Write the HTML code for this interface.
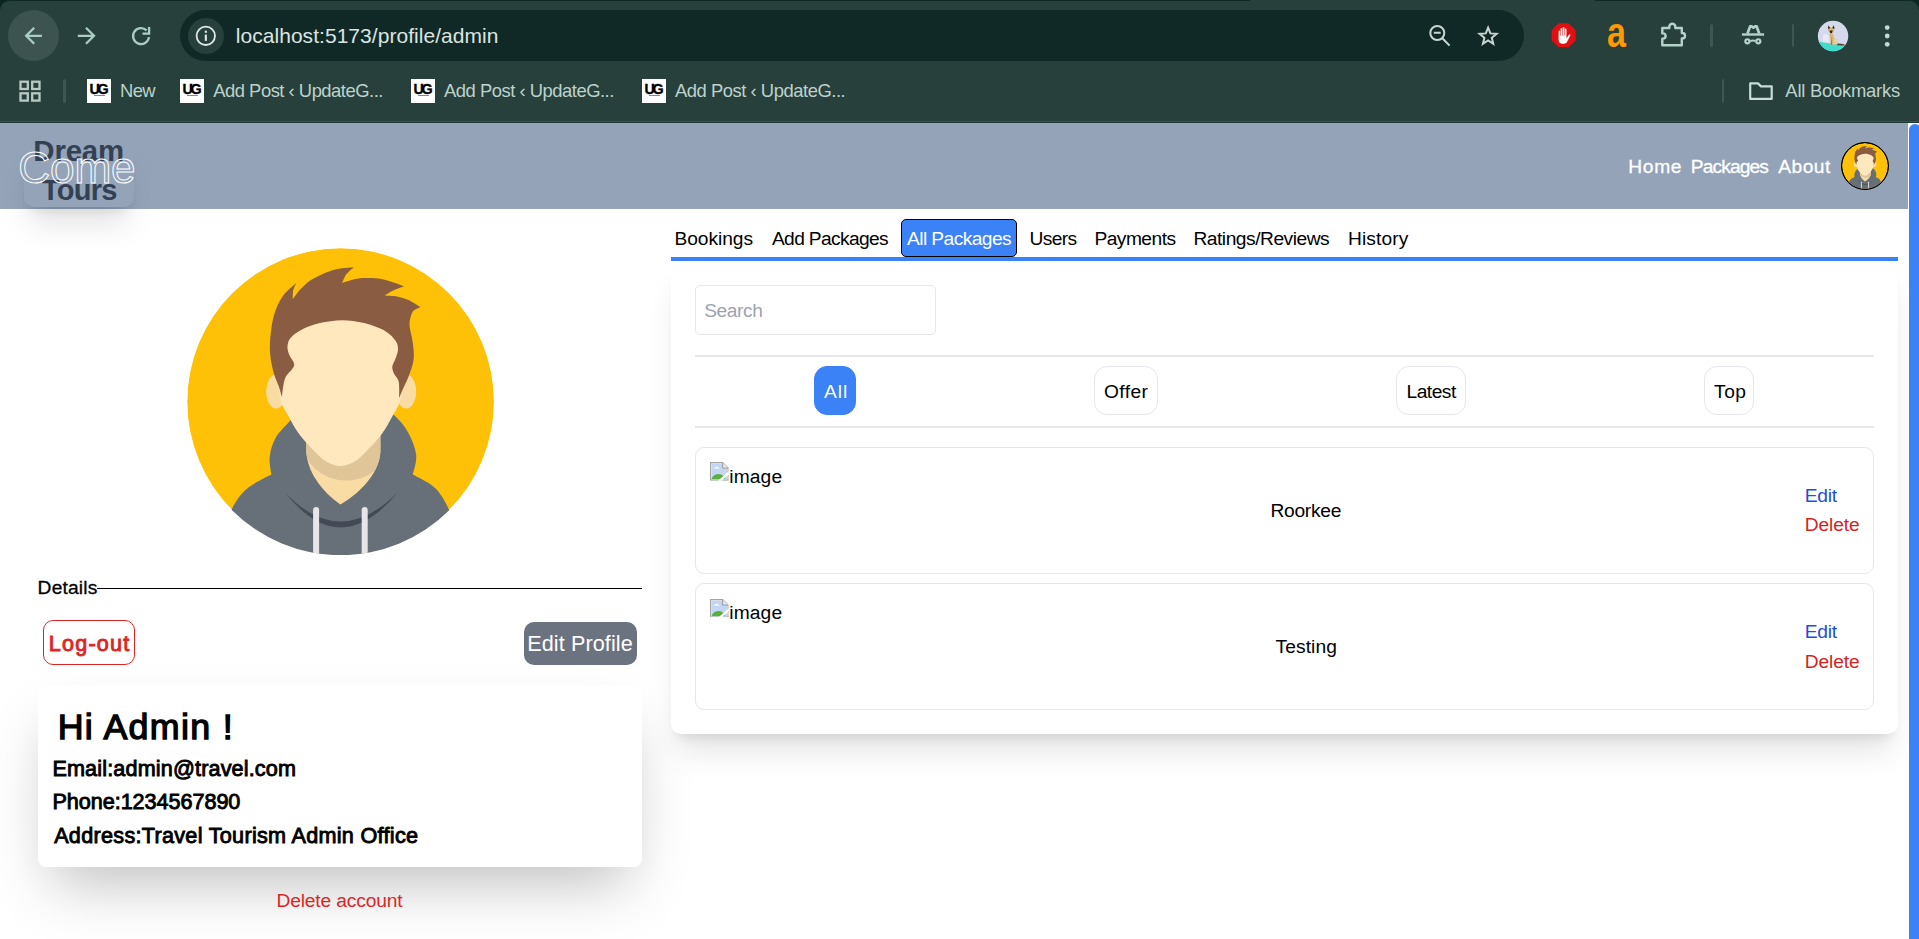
<!DOCTYPE html>
<html lang="en">
<head>
<meta charset="utf-8">
<title>Dream Tours - Admin Profile</title>
<style>
*{box-sizing:border-box;margin:0;padding:0}
html,body{width:1919px;height:939px;overflow:hidden;background:#fff}
body{position:relative;font-family:"Liberation Sans",sans-serif;color:#000}
.abs{position:absolute}
.t{position:absolute;white-space:nowrap;line-height:1}
/* ---------- browser chrome ---------- */
#chrome{position:absolute;left:0;top:0;width:1919px;height:123px;background:#27403b;overflow:hidden}
#chrome .edge{position:absolute;left:0;top:0;width:1919px;height:122px;border-top:1px solid #0d2723;border-radius:10px 10px 0 0;box-shadow:0 0 0 12px #0a2420}
#chrome .bline{position:absolute;left:0;top:121px;width:1919px;height:2px;background:linear-gradient(#414b48 0 50%,#213934 50% 100%)}
#backbg{left:7.5px;top:10px;width:51px;height:51px;border-radius:50%;background:#3d5350}
#urlbar{left:180px;top:10px;width:1344px;height:51px;border-radius:26px;background:#112926}
#infobg{left:188px;top:18px;width:36px;height:36px;border-radius:50%;background:#27403b}
.fav{position:absolute;top:79px;width:24px;height:24px;background:#fff;overflow:hidden}
.fav b{-webkit-text-stroke:.35px #000;position:absolute;left:2.6px;top:3.4px;font-size:14.4px;line-height:14px;letter-spacing:-2.5px;color:#000;font-weight:bold}
.fav i{position:absolute;left:7px;top:16.3px;width:11px;height:1.2px;background:#888}
.vsep{position:absolute;width:2.5px;border-radius:2px;background:#3d5751}
/* ---------- page ---------- */
#nav{left:0;top:123px;width:1908px;height:85.5px;background:#94a3b8}
#sb{left:1908px;top:123px;width:11px;height:816px;background:#fff}
#sb i{position:absolute;left:1px;top:.5px;width:12px;height:830px;border-radius:6px;background:#3b82f6}
#logobox{left:24px;top:141px;width:110px;height:66px;border-radius:10px;background:#94a3b8;box-shadow:0 24px 30px -6px rgba(0,0,0,.1),0 10px 12px -7px rgba(0,0,0,.1)}
#navav{left:1841px;top:141.7px;width:48.2px;height:48.2px;border:1.1px solid #000;border-radius:50%;overflow:hidden;background:#000}
#logout{left:43px;top:620px;width:92px;height:45px;border:1.2px solid #dc2626;border-radius:10px}
#editp{left:524px;top:622px;width:113.2px;height:43px;border-radius:10px;background:#6b7280}
#info{left:38px;top:685px;width:603.6px;height:182px;border-radius:8px;background:#fff;box-shadow:0 30px 60px -14px rgba(0,0,0,.25)}
#card{left:671px;top:261px;width:1226.6px;height:472.5px;border-radius:0 0 10px 10px;background:#fff;box-shadow:0 24px 30px -6px rgba(0,0,0,.1),0 10px 12px -7px rgba(0,0,0,.1)}
#tabsel{left:901px;top:219px;width:115.8px;height:38px;border:1.2px solid #000;border-radius:5px;background:#3b82f6}
#search{left:695px;top:285px;width:240.6px;height:49.6px;border:1.2px solid #e5e7eb;border-radius:5px}
.hr{left:695px;width:1178.5px;height:2px;background:#e5e7eb}
.fb{top:366.2px;height:49.3px;border:1.2px solid #e5e7eb;border-radius:13px}
.item{left:695px;width:1178.8px;height:126.6px;border:1.2px solid #e5e7eb;border-radius:9px}

</style>
</head>
<body>
<!-- CHROME -->
<div id="chrome">
  <div class="edge"></div>
  <div class="bline"></div>
  <div class="abs" id="tgap" style="left:1250px;top:0;width:345px;height:2px;background:#27403b"></div>
  <div id="backbg" class="abs"></div>
  <div id="urlbar" class="abs"></div>
  <div id="infobg" class="abs"></div>
  <svg class="abs" style="left:0;top:0" width="1919" height="122" viewBox="0 0 1919 122" fill="none">
    <!-- back / forward / reload -->
    <g stroke="#a9cdc3" stroke-width="2.3" fill="none">
      <path d="M41.9 35.8H26.6M34.2 27.8L26.2 35.8L34.2 43.8"/>
      <path d="M77.8 35.8H93.6M86 27.8L94 35.8L86 43.8"/>
      <path d="M146.6 30.3A8 8 0 1 0 149 37.2"/>
      <path d="M149.1 27V33.6H142.5"/>
    </g>
    <!-- info -->
    <circle cx="205.8" cy="35.8" r="9.2" stroke="#dfe8e5" stroke-width="1.8"/>
    <rect x="204.8" y="34.6" width="2.1" height="6.3" fill="#dfe8e5"/>
    <rect x="204.8" y="30.7" width="2.1" height="2.1" fill="#dfe8e5"/>
    <!-- zoom out -->
    <g stroke="#c8d6d2" stroke-width="2">
      <circle cx="1437.3" cy="33" r="7"/>
      <path d="M1433.8 32.8H1440.7M1442.3 38.2L1449.6 45.6"/>
    </g>
    <!-- star -->
    <path d="M1488.1 27.7L1490.4 33.4L1496.6 33.8L1491.8 37.8L1493.3 43.8L1488.1 40.5L1482.9 43.8L1484.4 37.8L1479.6 33.8L1485.8 33.4Z" stroke="#c8d6d2" stroke-width="2" stroke-linejoin="miter" stroke-miterlimit="10"/>
    <!-- adblock -->
    <path d="M1558.6 23.2H1568.6L1575.7 30.3V40.3L1568.6 47.3H1558.6L1551.6 40.3V30.3Z" fill="#df0f12"/>
    <path d="M1558.6 31.2c0-1 1.5-1 1.5 0v4.6h.5v-7c0-1.1 1.6-1.1 1.6 0v6.6h.5v-7.5c0-1.1 1.7-1.1 1.7 0v7.6h.5v-6.2c0-1.1 1.6-1.1 1.6 0v9l2.4-3.6c.6-.9 1.9-.2 1.4.8l-3.2 6.3c-.7 1.4-1.9 1.9-3.3 1.900000h-1.400000c-2.2 0-3.8-1.6-3.8-3.800000z" fill="#fff"/>
    <!-- puzzle -->
    <path d="M1662.3 28h7v-1.3a3 3 0 0 1 6 0v1.3h6.5v5h.5a2.7 2.7 0 0 1 0 5.4h-.5v6.9h-19.5v-6.7h.7a2.6 2.6 0 0 0 0-5.2h-.7z" stroke="#b4d2c9" stroke-width="2.4" stroke-linejoin="round"/>
    <!-- incognito -->
    <g stroke="#b4d2c9" fill="none">
      <path d="M1741.9 34.5H1764.1" stroke-width="2.4"/>
      <path d="M1747.4 33.8L1750.2 26.3H1751.6L1753.4 27.7L1755.2 26.3H1756.6L1759.3 33.8" stroke-width="2.7" stroke-linejoin="round"/>
      <circle cx="1747.4" cy="41.3" r="2.05" stroke-width="2.2"/>
      <circle cx="1758.3" cy="41.3" r="2.05" stroke-width="2.2"/>
      <path d="M1750.2 41.1Q1752.850000 40 1755.5 41.1" stroke-width="1.9"/>
    </g>
    <!-- dots -->
    <g fill="#c3d9d2"><circle cx="1887.2" cy="27.6" r="2.4"/><circle cx="1887.2" cy="36" r="2.4"/><circle cx="1887.2" cy="44.3" r="2.4"/></g>
    <!-- profile avatar -->
    <clipPath id="pc"><circle cx="1833.05" cy="36" r="15.2"/></clipPath>
    <g clip-path="url(#pc)">
      <rect x="1817" y="20" width="33" height="33" fill="#d5d9ec"/>
      <path d="M1822.8 35.5q3-2.5 5.8-.5l.5 7.5h-6z" fill="#e7e9f3"/>
      <path d="M1817 41.6L1849 46V53H1817Z" fill="#41dccb"/>
      <path d="M1831.6 37.5q4.2-1.2 6 3.3l.4 3.5h-6.2z" fill="#e9cf9c"/>
      <path d="M1837.5 43.6q4 .2 7.2 1l-.2.9-7.4-.3z" fill="#5a3b2b"/>
      <path d="M1829.3 33.5l3.8.2.7 4-.6 7.3-2.4.2-.4-6z" fill="#d9b479"/>
      <path d="M1827.7 28.2l.5-2.7 2 2.2h1.6l2-2.4.6 3.1-.8 3.3-2.5 2.3-2.6-2.2z" fill="#d9b479"/>
      <path d="M1828.1 25.4l2.2 2.5-2 1.3zM1834 25.2l.4 3.8-2.2-1.1zM1829.6 30.5h3l-.4 2-1.1.9000-1.1-.9000z" fill="#2a2220"/>
      <path d="M1831.2 36l.6 8.7h-.8z" fill="#7a5a3a"/>
    </g>
    <!-- apps grid -->
    <g stroke="#b9c9c4" stroke-width="2.3">
      <rect x="20.5" y="81.7" width="7.3" height="7.3"/><rect x="32.2" y="81.7" width="7.3" height="7.3"/>
      <rect x="20.5" y="93.3" width="7.3" height="7.3"/><rect x="32.2" y="93.3" width="7.3" height="7.3"/>
    </g>
    <!-- folder -->
    <path d="M1750.2 83.400000h7.800000l3 3h10.700000v12.500000h-21.500000z" stroke="#c9dcd6" stroke-width="2.2" stroke-linejoin="round"/>
  </svg>
  <div class="t" id="amz" style="left:1606.5px;top:11.9px;font-size:42px;font-weight:bold;color:#ff9900;transform-origin:0 0;transform:scaleX(.81)">a</div>
  <div class="vsep" style="left:1710px;top:23.5px;height:23.8px"></div>
  <div class="vsep" style="left:1791.7px;top:23.5px;height:23.8px"></div>
  <span class="t" id="url" style="left:235.78px;top:24.62px;font-size:21px;color:#dbe4e1;letter-spacing:0.044px;">localhost:5173/profile/admin</span>
  <span class="t" id="bm1" style="left:119.89px;top:81.92px;font-size:18.4px;color:#bdd2cc;letter-spacing:-0.516px;">New</span>
  <span class="t" id="bm2" style="left:213.26px;top:81.92px;font-size:18.4px;color:#bdd2cc;letter-spacing:-0.490px;">Add Post ‹ UpdateG...</span>
  <span class="t" id="bm3" style="left:443.96px;top:81.92px;font-size:18.4px;color:#bdd2cc;letter-spacing:-0.475px;">Add Post ‹ UpdateG...</span>
  <span class="t" id="bm4" style="left:674.96px;top:81.92px;font-size:18.4px;color:#bdd2cc;letter-spacing:-0.460px;">Add Post ‹ UpdateG...</span>
  <span class="t" id="bm5" style="left:1785.36px;top:81.92px;font-size:18.4px;color:#bdd2cc;letter-spacing:-0.228px;">All Bookmarks</span>
  <div class="vsep" style="left:63px;top:79px;height:23.5px"></div>
  <div class="vsep" style="left:1721.8px;top:79px;height:23.5px"></div>
  <div class="fav" style="left:87px"><b>UG</b><i></i></div>
  <div class="fav" style="left:180px"><b>UG</b><i></i></div>
  <div class="fav" style="left:411px"><b>UG</b><i></i></div>
  <div class="fav" style="left:642px"><b>UG</b><i></i></div>
  
</div>
<!-- PAGE -->
<div id="nav" class="abs"></div>
<svg width="0" height="0" style="position:absolute"><defs>
<symbol id="av" viewBox="186.8 247.5 307.2 307.2">
<clipPath id="avc"><circle cx="340.4" cy="401.1" r="153.6"/></clipPath>
<clipPath id="nkc"><path d="M306.1 430L306.1 451C307 470 320 490 340.2 503.9C364 490 379.3 470 380.2 451L380.2 430Z"/></clipPath>
<g clip-path="url(#avc)">
<circle cx="340.4" cy="401.1" r="153.3" fill="#ffc107"/>
<path d="M300 410C298.2 411.9 293.1 416.7 289.0 421.3C284.9 425.9 278.6 431.7 275.4 437.5C272.1 443.3 270.2 450.1 269.5 456.2C268.8 462.3 270.9 471.1 271.2 474.1C267.4 476.2 254.0 482.5 248.2 486.9C242.4 491.3 239.6 495.6 236.2 500.5C232.8 505.4 229.4 513.4 228.0 516.0L228 570L452 570L452 516C450.4 512.9 445.7 502.2 442.4 497.1C439.1 492.0 437.2 489.0 432.2 485.2C427.2 481.4 415.9 476.0 412.6 474.1C413.2 470.8 416.7 461.4 416.0 454.5C415.3 447.6 411.6 438.6 408.3 432.4C405.0 426.1 400.3 421.1 396.4 417.0C392.5 412.9 386.9 409.5 385.0 408.0Z" fill="#677079"/>
<path d="M284.8 492Q340.2 562.2 398.1 491.2Q340.2 550.4 284.8 492Z" fill="#434955"/>
<rect x="312.9" y="506.5" width="6" height="60" rx="3" fill="#e6e6e6"/>
<rect x="361.5" y="506.5" width="6" height="60" rx="3" fill="#e6e6e6"/>
<path d="M306.1 430L306.1 451C307 470 320 490 340.2 503.9C364 490 379.3 470 380.2 451L380.2 430Z" fill="#f9dca4"/>
<g clip-path="url(#nkc)"><ellipse cx="346" cy="440" rx="44" ry="40" fill="#dfc597"/></g>
<ellipse cx="276" cy="391" rx="10" ry="17" fill="#f9dca4"/>
<ellipse cx="406" cy="391" rx="10" ry="17" fill="#f9dca4"/>
<path d="M279 312L279 380C279.2 383.3 278.8 393.8 280.5 400.0C282.2 406.2 285.9 411.3 289.0 417.0C292.1 422.7 295.0 428.3 299.3 434.0C303.6 439.7 310.1 446.4 314.6 451.0C319.1 455.6 322.2 458.9 326.5 461.3C330.8 463.7 335.6 465.6 340.2 465.6C344.8 465.6 349.7 463.7 354.0 461.3C358.3 458.9 361.4 455.6 365.9 451.0C370.4 446.4 376.9 439.7 381.2 434.0C385.5 428.3 388.4 422.7 391.5 417.0C394.6 411.3 398.3 406.2 400.0 400.0C401.7 393.8 401.2 383.3 401.5 380.0L401.5 312Z" fill="#ffe8be"/>
<path d="M281.7 396.8C281.2 395.1 280.1 390.5 278.8 386.5C277.5 382.5 275.1 378.0 273.7 372.9C272.3 367.8 270.8 361.6 270.2 355.9C269.6 350.2 269.4 345.6 270.0 338.8C270.6 332.0 271.7 322.1 273.7 315.0C275.7 307.9 278.4 301.6 282.2 296.2C285.9 290.8 293.9 284.6 296.2 282.3C295.7 283.6 293.6 287.2 293.0 290.0C292.4 292.8 292.6 297.3 292.5 298.8C293.9 297.0 297.6 291.4 301.0 288.0C304.4 284.6 307.5 281.4 312.9 278.3C318.3 275.2 326.6 271.3 333.4 269.4C340.2 267.5 350.4 267.2 353.8 266.8C352.5 268.0 348.0 271.4 346.0 274.0C344.0 276.6 342.6 281.2 341.9 282.6C343.9 282.0 349.8 279.7 354.0 278.8C358.2 277.9 362.3 277.4 367.4 277.5C372.5 277.6 378.4 277.8 384.5 279.2C390.6 280.6 400.8 284.6 404.0 285.7C402.2 286.4 396.2 288.4 393.0 290.0C389.8 291.6 385.9 294.2 384.5 295.0C386.6 295.2 393.0 295.2 397.0 296.0C401.0 296.8 404.4 297.8 408.3 299.6C412.2 301.4 418.2 305.6 420.2 306.8C419.1 307.3 415.1 308.5 413.5 310.0C411.9 311.5 411.3 313.5 410.6 316.0C409.9 318.5 409.1 320.8 409.4 325.2C409.7 329.6 411.9 336.5 412.6 342.2C413.3 347.9 414.1 353.6 413.4 359.3C412.7 365.0 410.1 371.4 408.3 376.3C406.5 381.2 404.1 385.4 402.5 389.0C400.9 392.6 399.5 396.2 398.9 397.6C398.9 396.0 399.1 391.0 399.0 388.0C398.9 385.0 399.0 382.2 398.1 379.7C397.2 377.2 394.8 375.2 393.8 372.9C392.8 370.6 391.8 368.7 392.1 366.1C392.4 363.6 394.6 360.5 395.5 357.6C396.4 354.8 397.8 351.9 397.8 349.0C397.8 346.1 397.7 343.6 395.5 340.5C393.3 337.4 389.8 333.3 384.5 330.3C379.2 327.3 371.1 324.4 364.0 322.6C356.9 320.8 349.3 319.7 341.9 319.7C334.5 319.7 326.2 321.1 319.7 322.6C313.2 324.1 307.5 326.2 302.7 328.6C297.9 331.0 293.4 334.3 290.8 337.1C288.2 339.9 287.6 342.8 287.3 345.6C287.0 348.5 287.9 351.4 289.0 354.2C290.1 357.0 293.2 360.4 293.8 362.7C294.4 365.0 293.9 365.5 292.5 367.8C291.1 370.1 287.2 373.3 285.6 376.3C284.0 379.3 283.6 382.6 283.0 386.0C282.4 389.4 281.9 395.0 281.7 396.8Z" fill="#8a5c42"/>
</g>
</symbol></defs></svg><svg width="0" height="0" style="position:absolute"><defs><symbol id="broken" viewBox="0 0 16 16">
<clipPath id="bkc"><path d="M1.3 1.300H10.300V5.700H14.700V14.700H1.300Z"/></clipPath>
<path d="M.5 .5H10.800L15.5 5.200V15.500H.5Z" fill="#f4f6f9" stroke="#a3a3a3" stroke-width="1"/>
<g clip-path="url(#bkc)">
<rect x="1" y="1" width="14" height="14" fill="#c3d7f5"/>
<path d="M3 5.600c.2-.8 1.1-1 1.6-.6.3-1.2 2.1-1.2 2.4 0 .7-.2 1.3.1 1.4.6z" fill="#fff"/>
<ellipse cx="7.2" cy="16" rx="6.2" ry="5.8" fill="#55b03c"/>
</g>
<path d="M10.8 .5V5.200H15.5" fill="#e9ebee" stroke="#a3a3a3" stroke-width="1" stroke-linejoin="round"/>
<path d="M6.3 16.500L16.5 7.400L16.5 10.200L9.6 16.500Z" fill="#fff"/>
</symbol></defs></svg>

<div class="abs" id="logobox"></div>
<div class="abs" id="navav"><svg width="46" height="46" style="display:block"><use href="#av"/></svg></div>
<!-- left column -->
<svg class="abs" style="left:186.8px;top:247.5px" width="307.2" height="307.2"><use href="#av"/></svg>
<div class="abs" style="left:96.8px;top:588px;width:544.8px;height:1.3px;background:#000"></div>
<div class="abs" id="logout"></div>
<div class="abs" id="editp"></div>
<div class="abs" id="info"></div>
<!-- right column -->
<div class="abs" id="card"></div>
<div class="abs" style="left:671px;top:257px;width:1227px;height:4.2px;background:#3b82f6"></div>
<div class="abs" id="tabsel"></div>
<div class="abs" id="search"></div>
<div class="abs hr" style="top:355px"></div>
<div class="abs hr" style="top:426.2px"></div>
<div class="abs fb" style="left:814.4px;width:41.6px;background:#3b82f6;border-color:#3b82f6"></div>
<div class="abs fb" style="left:1093.8px;width:64.5px"></div>
<div class="abs fb" style="left:1396.4px;width:70.1px"></div>
<div class="abs fb" style="left:1704.2px;width:50.3px"></div>
<div class="abs item" style="top:447px"></div>
<div class="abs item" style="top:583px"></div>
<svg class="abs bi" style="left:710.1px;top:462.1px" width="18.7" height="18.7" viewBox="0 0 16 16"><use href="#broken"/></svg>
<svg class="abs bi" style="left:710.1px;top:598.6px" width="18.7" height="18.7" viewBox="0 0 16 16"><use href="#broken"/></svg>

<span class="t" id="lg1" style="left:33.33px;top:135.91px;font-size:29.4px;color:#334155;font-weight:bold;letter-spacing:-0.178px;">Dream</span>
<span class="t" id="lg3" style="left:41.87px;top:175.55px;font-size:29px;color:#334155;font-weight:bold;letter-spacing:-0.723px;">Tours</span>
<span class="t" id="lg2" style="left:18.36px;top:146.48px;font-size:44.2px;color:transparent;letter-spacing:-0.189px;-webkit-text-stroke:1px #fff;">Come</span>
<a class="t" id="n1" style="left:1628.33px;top:156.65px;font-size:19.2px;color:#fff;letter-spacing:0.647px;-webkit-text-stroke:.3px #fff;">Home</a>
<a class="t" id="n2" style="left:1690.72px;top:156.65px;font-size:19.2px;color:#fff;letter-spacing:-0.871px;-webkit-text-stroke:.3px #fff;">Packages</a>
<a class="t" id="n3" style="left:1778.16px;top:156.65px;font-size:19.2px;color:#fff;letter-spacing:0.505px;-webkit-text-stroke:.3px #fff;">About</a>
<span class="t" id="det" style="left:37.62px;top:577.55px;font-size:19.2px;color:#000;letter-spacing:0.169px;-webkit-text-stroke:.3px #000;">Details</span>
<span class="t" id="lo" style="left:48.78px;top:632.82px;font-size:21.6px;color:#dc2626;-webkit-text-stroke:0.90px #dc2626;letter-spacing:1.197px;">Log-out</span>
<span class="t" id="ep" style="left:527.23px;top:633.32px;font-size:21.6px;color:#fff;letter-spacing:0.101px;">Edit Profile</span>
<h2 class="t" id="hi" style="left:57.72px;top:709.60px;font-size:35.8px;color:#000;-webkit-text-stroke:1.31px #000;letter-spacing:1.304px;font-weight:400;">Hi Admin !</h2>
<p class="t" id="em" style="left:52.43px;top:757.97px;font-size:21.6px;color:#000;-webkit-text-stroke:0.90px #000;letter-spacing:0.153px;">Email:admin@travel.com</p>
<p class="t" id="ph" style="left:52.43px;top:790.97px;font-size:21.6px;color:#000;-webkit-text-stroke:0.90px #000;letter-spacing:-0.039px;">Phone:1234567890</p>
<p class="t" id="ad" style="left:54.16px;top:824.72px;font-size:21.6px;color:#000;-webkit-text-stroke:0.90px #000;letter-spacing:0.300px;">Address:Travel Tourism Admin Office</p>
<a class="t" id="da" style="left:276.43px;top:890.50px;font-size:19.2px;color:#dc2626;letter-spacing:-0.137px;">Delete account</a>
<a class="t" id="t1" style="left:674.42px;top:228.75px;font-size:19.2px;color:#000;letter-spacing:-0.038px;">Bookings</a>
<a class="t" id="t2" style="left:771.96px;top:228.75px;font-size:19.2px;color:#000;letter-spacing:-0.638px;">Add Packages</a>
<a class="t" id="t3" style="left:906.96px;top:228.75px;font-size:19.2px;color:#fff;letter-spacing:-0.563px;">All Packages</a>
<a class="t" id="t4" style="left:1029.52px;top:228.75px;font-size:19.2px;color:#000;letter-spacing:-0.634px;">Users</a>
<a class="t" id="t5" style="left:1094.42px;top:228.75px;font-size:19.2px;color:#000;letter-spacing:-0.523px;">Payments</a>
<a class="t" id="t6" style="left:1193.42px;top:228.75px;font-size:19.2px;color:#000;letter-spacing:-0.474px;">Ratings/Reviews</a>
<a class="t" id="t7" style="left:1348.02px;top:228.75px;font-size:19.2px;color:#000;letter-spacing:0.102px;">History</a>
<span class="t" id="se" style="left:704.13px;top:300.75px;font-size:19.2px;color:#9ca3af;letter-spacing:-0.416px;">Search</span>
<span class="t" id="f1" style="left:823.96px;top:381.75px;font-size:19.2px;color:#fff;letter-spacing:0.997px;">All</span>
<span class="t" id="f2" style="left:1104.09px;top:381.75px;font-size:19.2px;color:#000;letter-spacing:0.354px;">Offer</span>
<span class="t" id="f3" style="left:1406.52px;top:381.75px;font-size:19.2px;color:#000;letter-spacing:-0.513px;">Latest</span>
<span class="t" id="f4" style="left:1714.07px;top:381.75px;font-size:19.2px;color:#000;letter-spacing:0.500px;">Top</span>
<span class="t" id="i1" style="left:729.22px;top:466.75px;font-size:19.2px;color:#000;letter-spacing:0.155px;">image</span>
<span class="t" id="i2" style="left:729.22px;top:603.35px;font-size:19.2px;color:#000;letter-spacing:0.155px;">image</span>
<p class="t" id="p1" style="left:1270.42px;top:500.75px;font-size:19.2px;color:#000;letter-spacing:-0.267px;">Roorkee</p>
<p class="t" id="p2" style="left:1275.57px;top:637.35px;font-size:19.2px;color:#000;letter-spacing:0.079px;">Testing</p>
<a class="t" id="e1" style="left:1804.83px;top:485.50px;font-size:19.2px;color:#1d4ed8;letter-spacing:-0.287px;">Edit</a>
<a class="t" id="d1" style="left:1804.83px;top:515.00px;font-size:19.2px;color:#d61f1f;letter-spacing:-0.128px;">Delete</a>
<a class="t" id="e2" style="left:1804.83px;top:622.35px;font-size:19.2px;color:#1d4ed8;letter-spacing:-0.287px;">Edit</a>
<a class="t" id="d2" style="left:1804.83px;top:651.75px;font-size:19.2px;color:#d61f1f;letter-spacing:-0.128px;">Delete</a>
<div id="sb" class="abs"><i></i></div>
</body>
</html>
